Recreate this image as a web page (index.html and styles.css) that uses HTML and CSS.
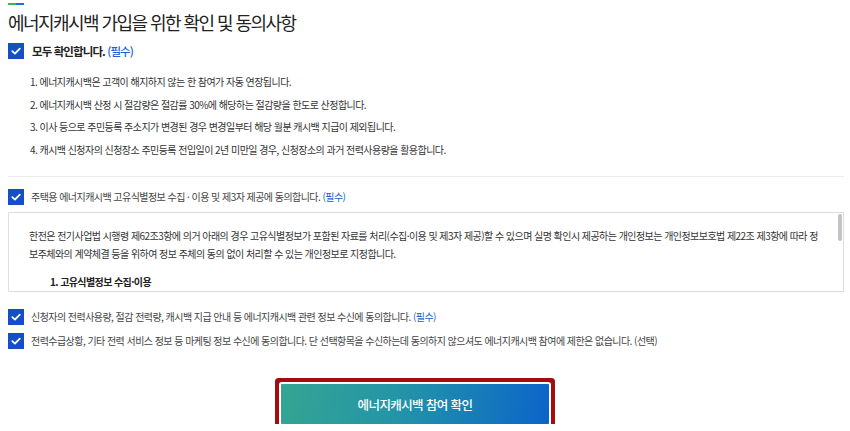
FILE: index.html
```html
<!DOCTYPE html>
<html lang="ko">
<head>
<meta charset="utf-8">
<title>에너지캐시백 가입 동의</title>
<link rel="stylesheet" href="styles.css">
</head>
<body>
<div class="page">
  <div class="accent"><span class="g"></span><span class="b"></span></div>
  <h1 class="title">에너지캐시백 가입을 위한 확인 및 동의사항</h1>

  <label class="check all">
    <span class="box"><svg viewBox="0 0 16 16" width="16" height="16"><path d="M4.3 8.2 L6.9 10.6 L11.8 5.7" fill="none" stroke="#fff" stroke-width="1.8" stroke-linecap="round" stroke-linejoin="round"/></svg></span>
    <span class="label">모두 확인합니다. <em class="req">(필수)</em></span>
  </label>

  <ol class="notes">
    <li>1. 에너지캐시백은 고객이 해지하지 않는 한 참여가 자동 연장됩니다.</li>
    <li>2. 에너지캐시백 산정 시 절감량은 절감률 30%에 해당하는 절감량을 한도로 산정합니다.</li>
    <li>3. 이사 등으로 주민등록 주소지가 변경된 경우 변경일부터 해당 월분 캐시백 지급이 제외됩니다.</li>
    <li>4. 캐시백 신청자의 신청장소 주민등록 전입일이 2년 미만일 경우, 신청장소의 과거 전력사용량을 활용합니다.</li>
  </ol>

  <hr class="divider">

  <label class="check">
    <span class="box"><svg viewBox="0 0 16 16" width="16" height="16"><path d="M4.3 8.2 L6.9 10.6 L11.8 5.7" fill="none" stroke="#fff" stroke-width="1.8" stroke-linecap="round" stroke-linejoin="round"/></svg></span>
    <span class="label">주택용 에너지캐시백 고유식별정보 수집 · 이용 및 제3자 제공에 동의합니다. <em class="req">(필수)</em></span>
  </label>

  <div class="terms">
    <p class="terms-text">한전은 전기사업법 시행령 제62조3항에 의거 아래의 경우 고유식별정보가 포함된 자료를 처리(수집·이용 및 제3자 제공)할 수 있으며 실명 확인시 제공하는 개인정보는 개인정보보호법 제22조 제3항에 따라 정보주체와의 계약체결 등을 위하여 정보 주체의 동의 없이 처리할 수 있는 개인정보로 지정합니다.</p>
    <p class="terms-head">1. 고유식별정보 수집·이용</p>
  </div>

  <div class="checks">
    <label class="check">
      <span class="box"><svg viewBox="0 0 16 16" width="16" height="16"><path d="M4.3 8.2 L6.9 10.6 L11.8 5.7" fill="none" stroke="#fff" stroke-width="1.8" stroke-linecap="round" stroke-linejoin="round"/></svg></span>
      <span class="label">신청자의 전력사용량, 절감 전력량, 캐시백 지급 안내 등 에너지캐시백 관련 정보 수신에 동의합니다. <em class="req">(필수)</em></span>
    </label>
    <label class="check">
      <span class="box"><svg viewBox="0 0 16 16" width="16" height="16"><path d="M4.3 8.2 L6.9 10.6 L11.8 5.7" fill="none" stroke="#fff" stroke-width="1.8" stroke-linecap="round" stroke-linejoin="round"/></svg></span>
      <span class="label">전력수급상황, 기타 전력 서비스 정보 등 마케팅 정보 수신에 동의합니다. 단 선택항목을 수신하는데 동의하지 않으셔도 에너지캐시백 참여에 제한은 없습니다. (선택)</span>
    </label>
  </div>

  <div class="actions">
    <button class="submit" type="button">에너지캐시백 참여 확인</button>
  </div>
</div>
</body>
</html>
```

FILE: styles.css
```css
* { box-sizing: border-box; }
html, body { margin: 0; padding: 0; background: #fff; }
body {
  font-family: "Noto Sans CJK KR", "Noto Sans", sans-serif;
  color: #333;
}
.page {
  padding: 3px 6px 0 8px;
}
.accent {
  display: flex;
  width: 16px;
  height: 2px;
}
.accent .g { flex: 1; background: #3cb54a; }
.accent .b { flex: 1; background: #1d6fd6; }

.title {
  margin: 4px 0 0;
  font-size: 18px;
  line-height: 26px;
  font-weight: 400;
  letter-spacing: -1.55px;
  color: #222;
}

.check {
  display: flex;
  align-items: center;
  gap: 7px;
  cursor: pointer;
}
.check .box {
  flex: none;
  width: 16px;
  height: 16px;
  background: #1450c4;
  display: flex;
}
.check .label {
  font-size: 10px;
  letter-spacing: -0.55px;
  color: #444;
  line-height: 16px;
}
.req { font-style: normal; color: #1e5fd4; }

.check.all { margin-top: 8px; gap: 8px; }
.check.all .label {
  font-size: 11.5px;
  font-weight: 700;
  letter-spacing: -0.9px;
  color: #222;
}
.check.all .req { font-weight: 500; }

.notes {
  list-style: none;
  margin: 12px 0 0;
  padding: 0 0 0 22px;
}
.notes li {
  font-size: 10px;
  letter-spacing: -0.55px;
  line-height: 22.5px;
  color: #333;
}

.divider {
  border: 0;
  border-top: 1px solid #ececec;
  margin: 15px 0 12px;
}

.terms {
  position: relative;
  margin-top: 7px;
  height: 80px;
  border: 1px solid #dedede;
  overflow: hidden;
  padding: 14px 18px 0 20px;
}
.terms::after {
  content: "";
  position: absolute;
  right: 1px;
  top: 1px;
  width: 4px;
  height: 27px;
  border-radius: 2px;
  background: #c4c4c4;
}
.terms-text {
  margin: 0;
  font-size: 10px;
  letter-spacing: -0.55px;
  line-height: 18px;
  color: #333;
  word-break: break-all;
}
.terms-head {
  margin: 10px 0 0 21px;
  font-size: 10px;
  font-weight: 700;
  letter-spacing: -0.6px;
  line-height: 18px;
  color: #222;
}

.checks {
  margin-top: 17px;
  display: flex;
  flex-direction: column;
  gap: 8px;
}

.actions {
  display: flex;
  justify-content: center;
  padding-top: 35px;
  padding-right: 22px;
}
.submit {
  width: 268px;
  height: 40px;
  border: 0;
  background: linear-gradient(100deg, #35a592 0%, #2394a8 45%, #0b64ca 100%);
  color: #fff;
  font-family: "Noto Sans CJK KR", "Noto Sans", sans-serif;
  font-size: 12.5px;
  font-weight: 500;
  letter-spacing: -0.6px;
  box-shadow: 0 0 0 2px #fff, 0 0 0 6px #a30d0d;
  border-radius: 1px;
}
```
